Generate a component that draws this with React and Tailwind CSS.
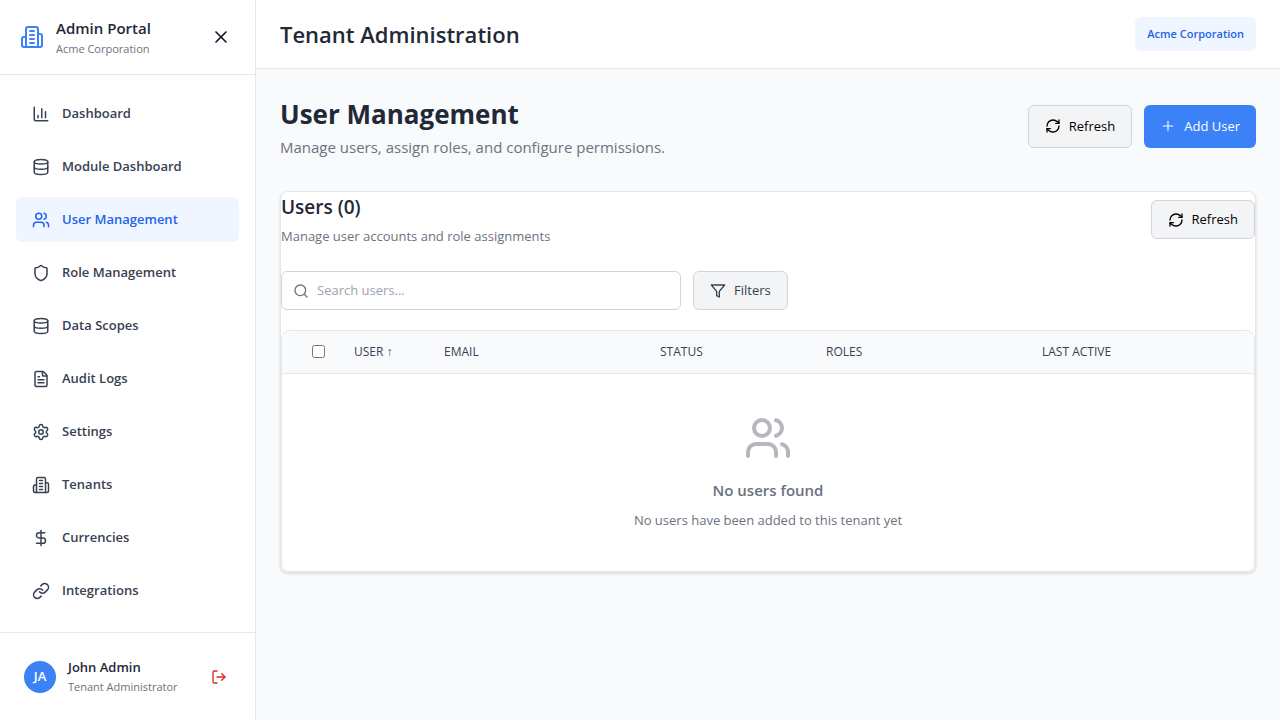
import React from "react";
import {
  ChartColumn,
  Database,
  DollarSign,
  FileText,
  Link,
  LogOut,
  Plus,
  RefreshCw,
  Search,
  Settings,
  Shield,
  Users,
  X,
} from "lucide-react";

function Building({ size = 24, className = "" }) {
  return (
    <svg
      width={size}
      height={size}
      viewBox="0 0 24 24"
      fill="none"
      stroke="currentColor"
      strokeWidth="2"
      strokeLinecap="round"
      strokeLinejoin="round"
      className={className}
      aria-hidden="true"
    >
      <path d="M6 22V4a2 2 0 0 1 2-2h8a2 2 0 0 1 2 2v18Z" />
      <path d="M6 12H4a2 2 0 0 0-2 2v6a2 2 0 0 0 2 2h2" />
      <path d="M18 9h2a2 2 0 0 1 2 2v9a2 2 0 0 1-2 2h-2" />
      <path d="M10 6h4" />
      <path d="M10 10h4" />
      <path d="M10 14h4" />
      <path d="M10 18h4" />
    </svg>
  );
}

function FilterIcon({ size = 16 }) {
  return (
    <svg
      width={size}
      height={size}
      viewBox="0 0 24 24"
      fill="none"
      stroke="currentColor"
      strokeWidth="2"
      strokeLinecap="round"
      strokeLinejoin="round"
      aria-hidden="true"
    >
      <polygon points="22 3 2 3 10 12.46 10 19 14 21 14 12.46 22 3" />
    </svg>
  );
}

const navItems = [
  { label: "Dashboard", icon: ChartColumn },
  { label: "Module Dashboard", icon: Database },
  { label: "User Management", icon: Users, active: true },
  { label: "Role Management", icon: Shield },
  { label: "Data Scopes", icon: Database },
  { label: "Audit Logs", icon: FileText },
  { label: "Settings", icon: Settings },
  { label: "Tenants", icon: Building },
  { label: "Currencies", icon: DollarSign },
  { label: "Integrations", icon: Link },
];

function Sidebar() {
  return (
    <aside className="flex h-screen w-64 shrink-0 flex-col border-r border-[#e5e7eb] bg-white">
      <div className="flex items-center justify-between border-b border-[#e5e7eb] px-5 py-4">
        <div className="flex items-center gap-3">
          <Building size={24} className="text-[#3b82f6]" />
          <div>
            <div className="text-[15px] leading-6 font-semibold text-[#1f2937]">Admin Portal</div>
            <div className="text-[11px] leading-[18px] text-[#6b7280]">Acme Corporation</div>
          </div>
        </div>
        <button type="button" aria-label="Close sidebar" className="rounded p-1 text-[#111827]">
          <X size={20} />
        </button>
      </div>

      <nav className="flex min-h-0 flex-1 flex-col gap-2 overflow-hidden p-4">
        {navItems.map(({ label, icon: Icon, active }) => (
          <a
            key={label}
            href="#"
            aria-current={active ? "page" : undefined}
            className={
              "flex items-center gap-3 rounded-md px-4 py-3 text-[13px] leading-[21px] font-semibold " +
              (active ? "bg-[#eff6ff] text-[#2563eb]" : "text-[#374151]")
            }
          >
            <Icon size={18} />
            {label}
          </a>
        ))}
      </nav>

      <div className="flex items-center gap-3 border-t border-[#e5e7eb] p-6">
        <div className="flex size-8 items-center justify-center rounded-full bg-[#3b82f6] text-[13px] font-semibold text-white">
          JA
        </div>
        <div className="flex-1">
          <div className="text-[13px] leading-[21px] font-semibold text-[#1f2937]">John Admin</div>
          <div className="text-[11px] leading-[18px] text-[#6b7280]">Tenant Administrator</div>
        </div>
        <button type="button" aria-label="Log out" className="rounded p-1 text-[#dc2626]">
          <LogOut size={16} />
        </button>
      </div>
    </aside>
  );
}

const columns = [
  { label: "USER ↑", width: "w-[90px]" },
  { label: "EMAIL", width: "w-[216px]" },
  { label: "STATUS", width: "w-[166px]" },
  { label: "ROLES", width: "w-[216px]" },
  { label: "LAST ACTIVE", width: "w-[224px]" },
];

function UsersTable() {
  return (
    <div className="overflow-x-auto rounded-lg border border-[#e5e7eb] bg-white">
      <table className="w-full table-fixed border-collapse">
        <thead>
          <tr className="border-b border-[#e5e7eb] bg-[#f9fafb]">
            <th className="h-[42px] w-[60px] pr-3 pl-6">
              <input type="checkbox" aria-label="Select all users" className="mx-auto block size-[13px]" />
            </th>
            {columns.map(({ label, width }) => (
              <th
                key={label}
                scope="col"
                className={"px-3 text-left text-xs leading-[18px] font-medium text-[#374151] " + width}
              >
                {label}
              </th>
            ))}
          </tr>
        </thead>
        <tbody>
          <tr>
            <td colSpan={6} className="py-10 text-center text-[#6b7280]">
              <Users size={48} className="mx-auto mb-4 opacity-50" />
              <h4 className="mb-2 text-[15px] leading-6 font-semibold">No users found</h4>
              <p className="text-[13px] leading-[21px]">No users have been added to this tenant yet</p>
            </td>
          </tr>
        </tbody>
      </table>
    </div>
  );
}

export default function App() {
  return (
    <div className="flex min-h-screen bg-[#f9fafb] font-['Open_Sans','Noto_Sans',sans-serif] text-[#1f2937]">
      <Sidebar />
      <div className="min-w-0 flex-1">
        <header className="flex items-center justify-between border-b border-[#e5e7eb] bg-white px-6 py-4">
          <h1 className="text-[22px] leading-9 font-semibold">Tenant Administration</h1>
          <span className="rounded-md bg-[#eff6ff] px-3 py-2 text-[11px] leading-[18px] font-semibold text-[#2563eb]">
            Acme Corporation
          </span>
        </header>

        <main className="p-6">
          <div className="mb-8 flex items-center justify-between">
            <div>
              <h2 className="text-[26px] leading-[42px] font-bold">User Management</h2>
              <p className="text-[15px] leading-6 text-[#6b7280]">
                Manage users, assign roles, and configure permissions.
              </p>
            </div>
            <div className="flex gap-3">
              <button
                type="button"
                className="flex items-center gap-2 rounded-md border border-[#d1d5db] bg-[#f3f4f6] px-4 py-[10px] text-[13px] leading-[21px] text-black"
              >
                <RefreshCw size={16} />
                Refresh
              </button>
              <button
                type="button"
                className="flex items-center gap-2 rounded-md bg-[#3b82f6] px-4 py-[11px] text-[13px] leading-[21px] text-white"
              >
                <Plus size={16} strokeWidth={1.6} />
                Add User
              </button>
            </div>
          </div>

          <section className="rounded-lg border border-[#e5e7eb] bg-white shadow-sm">
            <div className="mb-6 flex items-center justify-between">
              <div>
                <h3 className="mb-1 text-[19px] leading-[30px] font-semibold">Users (0)</h3>
                <p className="text-[13px] leading-[21px] text-[#6b7280]">
                  Manage user accounts and role assignments
                </p>
              </div>
              <button
                type="button"
                className="flex items-center gap-2 rounded-md border border-[#d1d5db] bg-[#f3f4f6] px-4 py-2 text-[13px] leading-[21px] text-black"
              >
                <RefreshCw size={16} />
                Refresh
              </button>
            </div>

            <div className="mb-5 flex gap-3">
              <label className="flex w-full max-w-[400px] items-center gap-2 rounded-md border border-[#d1d5db] bg-white px-[11px] text-[#6b7280]">
                <Search size={16} />
                <input
                  type="search"
                  aria-label="Search users"
                  placeholder="Search users..."
                  className="min-w-0 flex-1 text-[13px] leading-[21px] text-[#1f2937] outline-none placeholder:text-[#9ca3af]"
                />
              </label>
              <button
                type="button"
                className="flex items-center gap-2 rounded-md border border-[#d1d5db] bg-[#f3f4f6] px-4 py-2 text-[13px] leading-[21px] text-[#374151]"
              >
                <FilterIcon size={16} />
                Filters
              </button>
            </div>

            <UsersTable />
          </section>
        </main>
      </div>
    </div>
  );
}
